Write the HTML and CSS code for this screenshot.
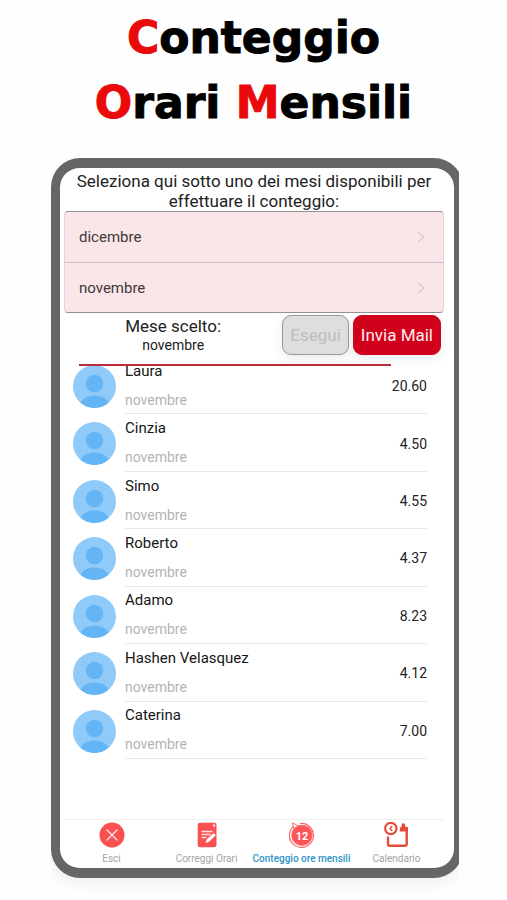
FILE: index.html
```html
<!DOCTYPE html>
<html lang="it">
<head>
<meta charset="utf-8">
<meta name="viewport" content="width=device-width, initial-scale=1">
<title>Conteggio Orari Mensili</title>
<link rel="stylesheet" href="styles.css">
</head>
<body>
<svg class="defs" aria-hidden="true">
  <symbol id="avatar" viewBox="0 0 43 43">
    <circle cx="21.5" cy="21.5" r="21.5" fill="#90caf9"/>
    <circle cx="21.5" cy="18.5" r="8.7" fill="#64b5f6"/>
    <path d="M7.5 37.8C10 32.5 15.500 30.500 21.500 30.500S33 32.500 35.500 37.800A21.500 21.500 0 0 1 7.500 37.800Z" fill="#64b5f6"/>
  </symbol>
  <symbol id="chevron" viewBox="0 0 8 12">
    <path d="M1 1l6 5-6 5" fill="none" stroke="#d9cccf" stroke-width="1.3"/>
  </symbol>
</svg>
<h1 class="title"><span class="initial">C</span>onteggio<br><span class="initial">O</span>rari <span class="initial">M</span>ensili</h1>
<div class="stage">
  <main class="phone">
    <p class="intro">Seleziona qui sotto uno dei mesi disponibili per effettuare il conteggio:</p>
    <div class="months">
      <button class="month" type="button">dicembre<svg class="chevron"><use href="#chevron"/></svg></button>
      <button class="month" type="button">novembre<svg class="chevron"><use href="#chevron"/></svg></button>
    </div>
    <section class="chosen">
      <p class="chosen-text"><span class="chosen-label">Mese scelto:</span><span class="chosen-value">novembre</span></p>
      <div class="actions">
        <button class="btn btn-run" type="button" disabled>Esegui</button>
        <button class="btn btn-mail" type="button">Invia Mail</button>
      </div>
    </section>
    <div class="rule"></div>
    <ul class="people">
      <li class="person"><svg class="avatar"><use href="#avatar"/></svg><div class="info"><div class="who"><span class="name">Laura</span><span class="when">novembre</span></div><span class="hours">20.60</span></div></li>
      <li class="person"><svg class="avatar"><use href="#avatar"/></svg><div class="info"><div class="who"><span class="name">Cinzia</span><span class="when">novembre</span></div><span class="hours">4.50</span></div></li>
      <li class="person"><svg class="avatar"><use href="#avatar"/></svg><div class="info"><div class="who"><span class="name">Simo</span><span class="when">novembre</span></div><span class="hours">4.55</span></div></li>
      <li class="person"><svg class="avatar"><use href="#avatar"/></svg><div class="info"><div class="who"><span class="name">Roberto</span><span class="when">novembre</span></div><span class="hours">4.37</span></div></li>
      <li class="person"><svg class="avatar"><use href="#avatar"/></svg><div class="info"><div class="who"><span class="name">Adamo</span><span class="when">novembre</span></div><span class="hours">8.23</span></div></li>
      <li class="person"><svg class="avatar"><use href="#avatar"/></svg><div class="info"><div class="who"><span class="name">Hashen Velasquez</span><span class="when">novembre</span></div><span class="hours">4.12</span></div></li>
      <li class="person"><svg class="avatar"><use href="#avatar"/></svg><div class="info"><div class="who"><span class="name">Caterina</span><span class="when">novembre</span></div><span class="hours">7.00</span></div></li>
    </ul>
    <nav class="tabs">
      <a class="tab" href="#esci">
        <svg class="tab-icon" viewBox="0 0 26 26"><circle cx="13" cy="13" r="12.500" fill="#fb4f50"/><path d="M8 8l10 10M18 8L8 18" stroke="#ffe6e6" stroke-width="1.400" stroke-linecap="round"/></svg>
        Esci</a>
      <a class="tab" href="#correggi">
        <svg class="tab-icon" viewBox="0 0 26 26"><path d="M6 .8h11.500l5 4.700V23a2.300 2.300 0 0 1-2.300 2.300H6A2.300 2.300 0 0 1 3.700 23V3.100A2.300 2.300 0 0 1 6 .8Z" fill="#fa5052"/><path d="M17 .8h3.200a2.300 2.300 0 0 1 2.300 2.300V6Z" fill="#fa5052"/><circle cx="20" cy="3.500" r="1.200" fill="#ffe9e9"/><path d="M8 9.500h10M8 12.500h8M8 15.500h4" stroke="#ffe3e3" stroke-width="1.300" stroke-linecap="round"/><path d="M11.500 21l1.200-3.500 6.800-6.600 2.300 2.300-6.800 6.600Z" fill="#fff"/></svg>
        Correggi Orari</a>
      <a class="tab tab-active" href="#conteggio" aria-current="page">
        <svg class="tab-icon" viewBox="0 0 26 26"><circle cx="13" cy="13.300" r="10.600" fill="#fa5558"/><path d="M6 3.300A12 12 0 1 0 11 1.500" fill="none" stroke="#fa6a6c" stroke-width="1.200"/><circle cx="13" cy="13.300" r="9.800" fill="none" stroke="#ffc4c4" stroke-width=".7" stroke-dasharray="1 1.900"/><path d="M3.500.8l1.300 5.500 4.800-2.300Z" fill="#fff" stroke="#fa6a6c" stroke-width="1"/><text class="badge-number" x="13" y="17.500" text-anchor="middle">12</text></svg>
        Conteggio ore mensili</a>
      <a class="tab" href="#calendario">
        <svg class="tab-icon" viewBox="0 0 26 26"><circle cx="6.800" cy="6.500" r="5.700" fill="none" stroke="#e54b3c" stroke-width="2.200"/><path d="M8.200 4L6 6.700 8.200 9" fill="none" stroke="#e54b3c" stroke-width="1.400"/><path d="M4 15.500V22a1.700 1.700 0 0 0 1.700 1.700H21a1.700 1.700 0 0 0 1.700-1.700V6" fill="none" stroke="#e54b3c" stroke-width="2.400" stroke-linecap="round"/><path d="M15.800 9.500V5.300h1.700V3.200a1.900 1.900 0 0 1 3.800 0v2.100h2.600V9.500Z" fill="#e54b3c"/></svg>
        Calendario</a>
    </nav>
  </main>
</div>
</body>
</html>
```
FILE: styles.css
```css
* { box-sizing: border-box; }
body {
  margin: 0;
  background: #fefefe;
  font-family: Roboto, "Liberation Sans", sans-serif;
  color: #222;
}
p, ul { margin: 0; padding: 0; }
button { font-family: inherit; }
.defs { position: absolute; width: 0; height: 0; }
.title {
  margin: 0;
  padding: 5px 0 23px;
  font-family: "DejaVu Sans", sans-serif;
  font-size: 44px;
  line-height: 65px;
  font-weight: bold;
  text-align: center;
  color: #000;
  -webkit-text-stroke: 1px currentColor;
  stroke-linejoin: round;
}
.initial { color: #ea090b; }

.stage {
  margin: 0 48px 0 51px;
  padding-bottom: 22px;
  overflow: hidden;
}
.phone {
  display: flex;
  flex-direction: column;
  margin-right: -4px;
  padding: 3px 10px 0 4px;
  border: solid #666;
  border-width: 10px 9px;
  border-radius: 29px;
  background: #fff;
  box-shadow: 0 6px 14px rgba(0, 0, 0, 0.06);
}
.intro {
  padding: 0 10px;
  font-size: 17px;
  line-height: 20px;
  text-align: center;
}
.months {
  border: 1px solid #978f92;
  border-left-color: #e6d3d7;
  border-right-color: #e6d3d7;
  border-radius: 4px;
  background: #fae6e8;
  overflow: hidden;
}
.month {
  display: flex;
  align-items: center;
  justify-content: space-between;
  width: 100%;
  height: 50px;
  padding: 0 18px 0 14px;
  border: 0;
  background: none;
  font-size: 15px;
  color: #40383a;
}
.month + .month { border-top: 1px solid #cdbfc8; }
.chevron { width: 8px; height: 12px; }

.chosen {
  display: flex;
  justify-content: flex-end;
  padding: 2px 3px 0 0;
}
.chosen-text {
  flex: 1;
  display: flex;
  flex-direction: column;
  align-items: center;
  padding-top: 1px;
}
.chosen-label { font-size: 17px; line-height: 20px; }
.chosen-value { font-size: 14px; line-height: 18px; }
.actions { display: flex; gap: 4px; }
.btn {
  height: 40px;
  padding: 0 7px;
  border-radius: 9px;
  font-size: 17px;
  box-shadow: 0 4px 12px rgba(0, 0, 0, 0.08);
}
.btn-run {
  border: 1px solid #999;
  background: #dedede;
  color: #bdbdbd;
}
.btn-mail {
  border: 1px solid #cf0620;
  background: #d0021b;
  color: #ffe9ec;
}
.rule {
  position: relative;
  z-index: 1;
  height: 2px;
  margin: 9px 53px 0 15px;
  background: #bb2a3d;
}

.people {
  display: grid;
  grid-auto-rows: 1fr;
  height: 402px;
  margin: -9px 17px 0 9px;
  list-style: none;
}
.person {
  display: flex;
  gap: 9px;
}
.avatar {
  flex: none;
  width: 43px;
  height: 43px;
  margin-top: 8px;
}
.info {
  flex: 1;
  display: flex;
  align-items: center;
  justify-content: space-between;
  border-bottom: 1px solid #e9e9e9;
}
.who {
  display: flex;
  flex-direction: column;
  gap: 11px;
}
.name { font-size: 15px; line-height: 18px; color: #161616; }
.when, .hours { font-size: 14px; line-height: 18px; }
.when { color: #b3b3b3; }
.hours { padding-top: 2px; }

.tabs {
  display: grid;
  grid-template-columns: repeat(4, 1fr);
  margin-top: 60px;
  padding: 2px 0 3px;
  border-top: 1px solid #f0f0f0;
}
.tab {
  display: flex;
  flex-direction: column;
  align-items: center;
  gap: 5px;
  min-width: 0;
  font-size: 10px;
  line-height: 12px;
  color: #a3a3a3;
  text-decoration: none;
  white-space: nowrap;
}
.tab-active { color: #3193c6; font-weight: 500; }
.tab-icon { flex: none; width: 26px; height: 26px; }
.badge-number { font-size: 11px; font-weight: bold; fill: #fff; }
```
